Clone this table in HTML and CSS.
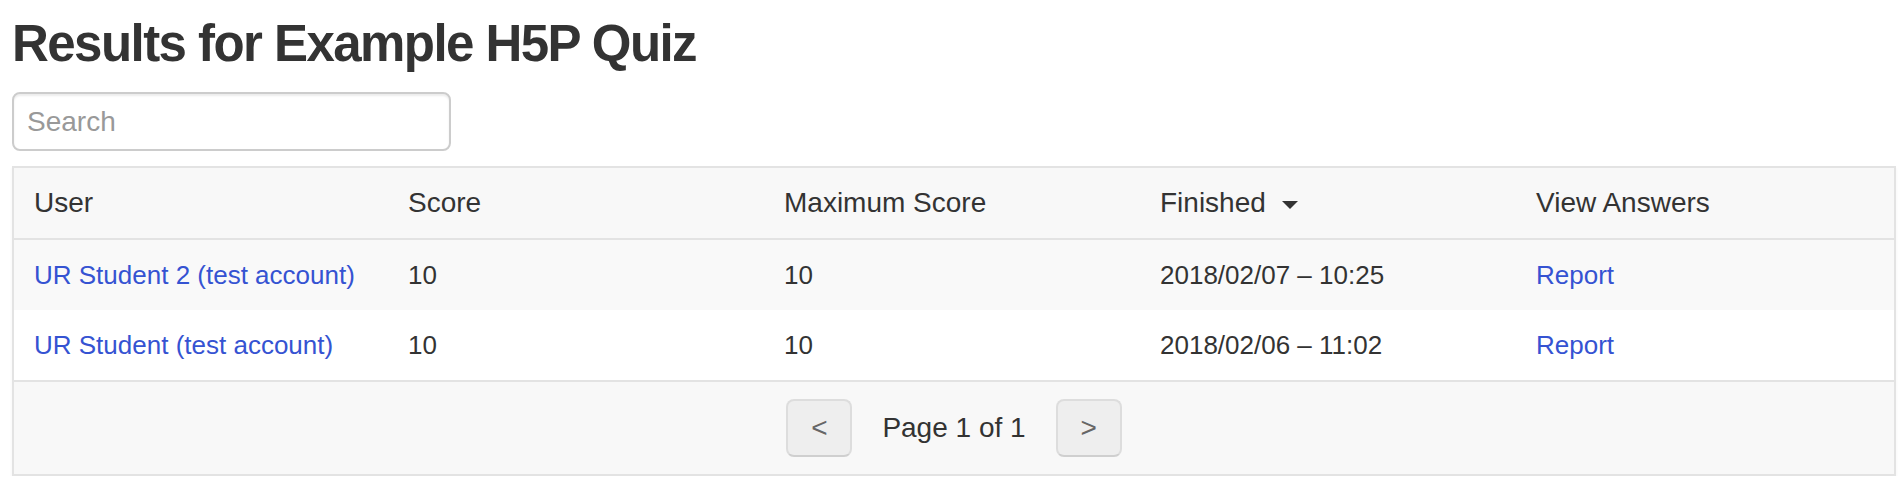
FILE: index.html
```html
<!DOCTYPE html>
<html lang="en">
<head>
<meta charset="utf-8">
<title>Results for Example H5P Quiz</title>
<link rel="stylesheet" href="styles.css">
</head>
<body>
<div class="page">
  <h1 class="title">Results for Example H5P Quiz</h1>
  <input class="search" type="text" placeholder="Search">
  <div class="results">
    <table class="grid">
      <thead>
        <tr>
          <th>User</th>
          <th>Score</th>
          <th>Maximum Score</th>
          <th>Finished <span class="caret"></span></th>
          <th>View Answers</th>
        </tr>
      </thead>
      <tbody>
        <tr class="odd">
          <td><a href="#">UR Student 2 (test account)</a></td>
          <td>10</td>
          <td>10</td>
          <td>2018/02/07 – 10:25</td>
          <td><a href="#">Report</a></td>
        </tr>
        <tr>
          <td><a href="#">UR Student (test account)</a></td>
          <td>10</td>
          <td>10</td>
          <td>2018/02/06 – 11:02</td>
          <td><a href="#">Report</a></td>
        </tr>
      </tbody>
    </table>
    <div class="pager">
      <button class="pbtn" type="button">&lt;</button>
      <span class="pinfo">Page 1 of 1</span>
      <button class="pbtn" type="button">&gt;</button>
    </div>
  </div>
</div>
</body>
</html>
```
FILE: styles.css
```css
html, body {
  margin: 0;
  padding: 0;
  background: #ffffff;
}
body {
  font-family: "Liberation Sans", Arial, Helvetica, sans-serif;
  color: #333333;
}
.page {
  padding: 0 8px 0 12px;
}
.title {
  margin: 0;
  padding-top: 14px;
  font-size: 51px;
  line-height: 60px;
  font-weight: 700;
  letter-spacing: -1.55px;
  color: #333333;
}
.search {
  display: block;
  box-sizing: border-box;
  margin-top: 18px;
  width: 439px;
  height: 59px;
  padding: 0 13px;
  border: 2px solid #cccccc;
  border-radius: 8px;
  box-shadow: inset 0 2px 2px rgba(0, 0, 0, 0.075);
  font-family: "Liberation Sans", Arial, sans-serif;
  font-size: 28px;
  color: #333333;
  outline: none;
}
.search::placeholder {
  color: #999999;
}
.results {
  margin-top: 15px;
  border: 2px solid #e3e3e3;
  box-shadow: 0 2px 3px rgba(0, 0, 0, 0.05);
}
.grid {
  width: 100%;
  table-layout: fixed;
  border-collapse: separate;
  border-spacing: 0;
}
.grid th {
  height: 70px;
  padding: 0 18px;
  text-align: left;
  font-weight: 400;
  font-size: 28px;
  background: #f8f8f8;
  border-bottom: 2px solid #e3e3e3;
  white-space: nowrap;
}
.grid td {
  height: 70px;
  padding: 0 18px;
  font-size: 26px;
  white-space: nowrap;
}
.grid th:first-child,
.grid td:first-child {
  padding-left: 20px;
}
.grid tr.odd td {
  background: #f9f9f9;
}
.grid a {
  color: #3553d2;
  text-decoration: none;
}
.caret {
  display: inline-block;
  width: 0;
  height: 0;
  margin-left: 8px;
  vertical-align: middle;
  border-top: 8px solid #333333;
  border-left: 8px solid transparent;
  border-right: 8px solid transparent;
}
.pager {
  display: flex;
  justify-content: center;
  align-items: center;
  gap: 30px;
  height: 92px;
  border-top: 2px solid #e3e3e3;
  background: #f8f8f8;
}
.pbtn {
  box-sizing: border-box;
  width: 66px;
  height: 58px;
  padding: 0;
  background: #eeeeee;
  border: 2px solid #dddddd;
  border-bottom-color: #cfcfcf;
  border-radius: 8px;
  font-family: "Liberation Sans", Arial, sans-serif;
  font-size: 28px;
  color: #666666;
}
.pinfo {
  font-size: 28px;
  color: #333333;
}
```
